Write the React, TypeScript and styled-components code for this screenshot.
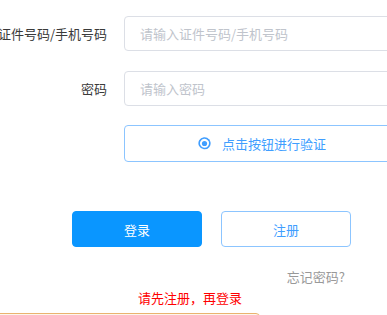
import React from "react";
import styled, { createGlobalStyle } from "styled-components";

const Global = createGlobalStyle`
  html, body { margin: 0; padding: 0; background: #fff; overflow: hidden; }
  body { font-family: "Noto Sans CJK SC", "Microsoft YaHei", sans-serif; }
  * { box-sizing: border-box; }
`;

const Page = styled.div`
  width: 387px;
  height: 315px;
  overflow: hidden;
  padding-top: 16px;
  display: flex;
  flex-direction: column;
`;

const FormRow = styled.div<{ $gap?: number }>`
  display: grid;
  grid-template-columns: 107px 276px;
  column-gap: 17px;
  align-items: center;
  margin-top: ${(p) => p.$gap ?? 0}px;
`;

const Label = styled.label`
  display: flex;
  justify-content: flex-end;
  white-space: nowrap;
  font-size: 13px;
  color: #3a3a3a;
`;

const Input = styled.input`
  height: 35px;
  width: 100%;
  border: 1px solid #dcdfe6;
  border-radius: 4px;
  padding: 0 15px;
  font-family: inherit;
  font-size: 13px;
  color: #606266;
  outline: none;
  &::placeholder { color: #c0c4cc; }
`;

const VerifyButton = styled.button`
  grid-column: 2;
  height: 37px;
  width: 100%;
  border: 1px solid #8cc5ff;
  border-radius: 4px;
  background: #fff;
  color: #409eff;
  font-family: inherit;
  font-size: 13px;
  display: flex;
  align-items: center;
  justify-content: center;
  gap: 11px;
  padding: 0;
`;

const ButtonRow = styled.div`
  display: flex;
  gap: 19px;
  margin-top: 49px;
  margin-left: 72px;
`;

const Btn = styled.button<{ $primary?: boolean }>`
  width: 130px;
  height: 36px;
  border-radius: 4px;
  font-family: inherit;
  font-size: 13px;
  border: 1px solid ${(p) => (p.$primary ? "#0a96ff" : "#8cc5ff")};
  background: ${(p) => (p.$primary ? "#0a96ff" : "#fff")};
  color: ${(p) => (p.$primary ? "#fff" : "#409eff")};
  padding: 0;
`;

const Forget = styled.div`
  margin-top: 22px;
  width: 345px;
  text-align: right;
  font-size: 13px;
  line-height: 16px;
  color: #999;
`;

const Error = styled.div`
  margin-top: 5px;
  width: 380px;
  text-align: center;
  font-size: 13px;
  line-height: 16px;
  color: #f00;
`;

const Notice = styled.div`
  margin-top: 7px;
  margin-left: -10px;
  width: 270px;
  height: 40px;
  flex-shrink: 0;
  border: 1px solid #eab36f;
  border-radius: 4px;
  background: #fdf6ec;
`;

const VerifyIcon = () => (
  <svg width="13" height="13" viewBox="0 0 13 13">
    <path
      d="M10.6 2.9 A5.3 5.3 0 1 0 11.6 4.8"
      fill="none"
      stroke="#409eff"
      strokeWidth="1.6"
      strokeLinecap="round"
    />
    <circle cx="6.5" cy="6.5" r="2.6" fill="#409eff" />
    <circle cx="11" cy="3.4" r="0.9" fill="#409eff" />
  </svg>
);

export default function App() {
  return (
    <>
      <Global />
      <Page>
        <FormRow>
          <Label>证件号码/手机号码</Label>
          <Input placeholder="请输入证件号码/手机号码" />
        </FormRow>
        <FormRow $gap={20}>
          <Label>密码</Label>
          <Input type="password" placeholder="请输入密码" />
        </FormRow>
        <FormRow $gap={19}>
          <VerifyButton>
            <VerifyIcon />
            <span>点击按钮进行验证</span>
          </VerifyButton>
        </FormRow>
        <ButtonRow>
          <Btn $primary>登录</Btn>
          <Btn>注册</Btn>
        </ButtonRow>
        <Forget>忘记密码?</Forget>
        <Error>请先注册，再登录</Error>
        <Notice />
      </Page>
    </>
  );
}
